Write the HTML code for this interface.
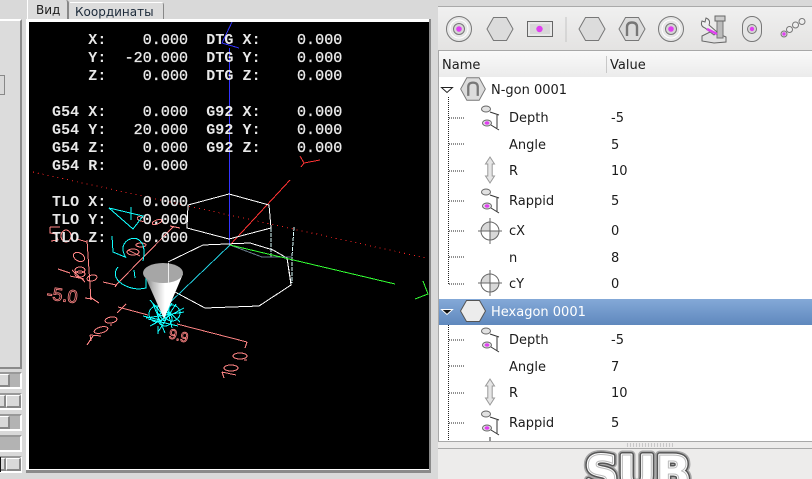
<!DOCTYPE html>
<html><head><meta charset="utf-8"><style>
html,body{margin:0;padding:0;background:#d9d9d9}
body{width:812px;height:479px;overflow:hidden;position:relative;font-family:"DejaVu Sans","Liberation Sans",sans-serif;font-size:13px;color:#1c1c1c}
div{position:absolute;box-sizing:border-box}
.t{white-space:nowrap;line-height:16px;height:16px}
.trough{left:0;width:22px;height:17px;background:#b3b3b3;border-right:2px solid #fff;border-bottom:2px solid #fff;border-top:2px solid #999}
.btn{background:#d9d9d9;border-top:1px solid #fff;border-right:2px solid #888;border-bottom:2px solid #888}
pre b{-webkit-text-stroke:0;font-weight:bold}
</style></head><body>
<!-- left panel -->
<div style="left:0;top:19px;width:22px;height:350px;background:#dcdcdc;border-top:2px solid #fff;border-right:2px solid #8a8a8a;border-bottom:2px solid #8a8a8a"></div>
<div style="left:0;top:75px;width:5px;height:20px;background:#d9d9d9;border:1px solid #888;border-left:0"></div>
<div class="trough" style="top:372px"><div class="btn" style="left:0;top:0;width:10px;height:13px"></div></div>
<div class="trough" style="top:393px"><div class="btn" style="left:6px;top:0;width:15px;height:13px;border-left:1px solid #fff"></div><div class="btn" style="left:0;top:0;width:6px;height:13px"></div></div>
<div class="trough" style="top:414px"><div class="btn" style="left:0;top:0;width:10px;height:13px"></div></div>
<div class="trough" style="top:435px"></div>
<div class="trough" style="top:456px"><div class="btn" style="left:6px;top:0;width:15px;height:13px;border-left:1px solid #fff"></div><div class="btn" style="left:0;top:0;width:6px;height:13px"></div><div style="left:0;top:-1px;width:1px;height:15px;background:#111"></div></div>
<!-- tabs -->
<div style="left:27px;top:0;width:42px;height:21px;background:#dcdcdc;border-left:1px solid #fff;border-right:2px solid #888;border-top-right-radius:3px"></div>
<div class="t" style="left:36px;top:2px;font-size:12px">Вид</div>
<div style="left:70px;top:2px;width:94px;height:18px;background:#dcdcdc;border-top:1px solid #fff;border-right:1px solid #888;border-top-right-radius:3px"></div>
<div class="t" style="left:75px;top:4px;font-size:12px;color:#1c2a3a">Координаты</div>
<!-- viewport frame -->
<div style="left:26px;top:19px;width:405px;height:454px;background:#fff;border-right:2px solid #8a8a8a;border-bottom:3px solid #8a8a8a"></div>
<div style="left:29px;top:22px;width:400px;height:447px;background:#000;overflow:hidden">
<svg width="400" height="447" viewBox="29 22 400 447" style="position:absolute;left:0;top:0">
<defs><linearGradient id="cone" x1="143" x2="183" y1="0" y2="0" gradientUnits="userSpaceOnUse"><stop offset="0" stop-color="#666"/><stop offset=".25" stop-color="#bbb"/><stop offset=".55" stop-color="#fff"/><stop offset="1" stop-color="#fff"/></linearGradient></defs>
<g fill="none" stroke-width="1" shape-rendering="crispEdges">
<path d="M28 171L426 258" stroke="#e22" stroke-dasharray="1 4"/>
<path d="M229.500 48V245" stroke="#33f"/>
<path d="M232 22L222 43L239 48" stroke="#33f"/>
<path d="M230 245L290 180" stroke="#f33"/>
<path d="M300 156L304 163L320 160M304 163L301 167" stroke="#f33"/>
<path d="M188 205L229 194L269 205L271 228L229 239L187 228Z" stroke="#fff"/>
<path d="M168 262L203 245L250 243L273 250L287 258L291 285L259 306L205 308L175 292" stroke="#fff"/>
<path d="M271 228V257M294 227L292 257V283" stroke="#dff" stroke-dasharray="4 1"/>
<path d="M287 258L291 283" stroke="#fff"/>
<path d="M230 245L262 257L292 257" stroke="#678" />
<path d="M230 245L395 284" stroke="#3f3"/>
<path d="M423 281L428 294L415 299" stroke="#3f3"/>
<path d="M230 245L160 312" stroke="#2cd"/>
<!-- pink -->
<g stroke="#ff8585">
<path d="M87 240L91 300M77 239L87 242M90 297L99 303M85 298L92 299"/>
<path d="M117 284L173 227M170 226L180 228M103 282L116 285M115 287L117 284"/>
<path d="M58 269L70 273M126 304L117 313M118 307L148 315M177 324L247 342M247 342L245 348"/>
<ellipse cx="79" cy="257" rx="6" ry="4" transform="rotate(30 79 257)"/>
<ellipse cx="80" cy="270" rx="5" ry="3"/><ellipse cx="80" cy="274" rx="5" ry="3"/>
<path d="M70 276L84 279M72 270L85 282"/>
<ellipse cx="92" cy="278" rx="5" ry="3" transform="rotate(-15 92 278)"/>
<ellipse cx="141" cy="219" rx="4" ry="2" transform="rotate(20 141 219)"/><ellipse cx="157" cy="222" rx="5" ry="2" transform="rotate(-20 157 222)"/>
<ellipse cx="141" cy="245" rx="5" ry="2"/><ellipse cx="133" cy="252" rx="6" ry="3"/>
<path d="M128 250L140 256"/>
<ellipse cx="111" cy="320" rx="6" ry="3" transform="rotate(-10 111 320)"/>
<path d="M110 325h2"/>
<ellipse cx="101" cy="330" rx="7" ry="3" transform="rotate(-15 101 330)"/>
<path d="M90 335L101 336M90 335L91 341M93 336L87 345"/>
<ellipse cx="240" cy="356" rx="7" ry="3"/><path d="M244 360h3"/>
<ellipse cx="231" cy="368" rx="7" ry="3"/>
<path d="M222 372L236 375M222 372L224 378"/>
<path d="M50 227H60M50 227V233L56 234L58 240L51 241"/>
<ellipse cx="66" cy="236" rx="5" ry="6"/>
</g>
<g fill="none" stroke="#ff8585" font-family="Liberation Sans" stroke-width=".8">
<text x="46" y="299" font-size="18" transform="rotate(8 46 299)">-5.0</text>
<text x="168" y="338" font-size="14" transform="rotate(14 168 338)">9.9</text>
</g>
<!-- cyan -->
<g stroke="#1ff">
<path d="M109 208L143 216L133 229ZM131 207V220"/>
<path d="M112 236L113 252L125 257"/>
<path d="M126 258Q119 246 128 240Q138 235 143 245Q145 252 143 261"/>
<path d="M118 267Q111 276 122 284Q134 291 146 288L146 277M134 270L135 278"/>
<path d="M150 300L164 316L172 303M146 318L184 312M153 304L165 333M176 304L158 332M148 319L178 326M158 302L180 322M150 326L184 308M168 312L172 328M158 326V334M143 316L160 320"/>
<circle cx="157" cy="314" r="8"/><circle cx="172" cy="313" r="8"/><circle cx="165" cy="319" r="7"/><circle cx="163" cy="310" r="6"/>
</g>
</g>
<path d="M144 274L164 319L183 274Z" fill="url(#cone)"/>
<ellipse cx="163" cy="273" rx="20" ry="10" fill="#a6a6a6"/>
<path d="M168.500 263V283" stroke="#eee" stroke-width="1"/>
<path d="M164 321L158 314M164 321L170 313" stroke="#1ff" shape-rendering="crispEdges"/>
</svg>
<pre style="position:absolute;left:23px;top:10px;margin:0;font:15px/18px 'Liberation Mono',monospace;letter-spacing:.07px;color:#e8e8e8;-webkit-text-stroke:.35px #e8e8e8">    <b>X:</b>    0.000  <b>DTG X:</b>    0.000
    <b>Y:</b>  -20.000  <b>DTG Y:</b>    0.000
    <b>Z:</b>    0.000  <b>DTG Z:</b>    0.000

<b>G54 X:</b>    0.000  <b>G92 X:</b>    0.000
<b>G54 Y:</b>   20.000  <b>G92 Y:</b>    0.000
<b>G54 Z:</b>    0.000  <b>G92 Z:</b>    0.000
<b>G54 R:</b>    0.000

<b>TLO X:</b>    0.000
<b>TLO Y:</b>    0.000
<b>TLO Z:</b>    0.000</pre>
</div>
<!-- right panel -->
<div style="left:438px;top:0;width:374px;height:7px;background:#d9d9d9;border-bottom:1px solid #aaa"></div>
<div style="left:438px;top:7px;width:374px;height:44px;background:linear-gradient(#f0f0f0,#e4e3e2);border-bottom:1px solid #a8a8a8"></div>
<div style="left:438px;top:51px;width:374px;height:391px;background:#fff;border-left:1px solid #a8a8a8;border-bottom:1px solid #a8a8a8"></div>
<div style="left:439px;top:51px;width:373px;height:26px;background:linear-gradient(#fafafa,#ebebeb)"></div>
<div style="left:606px;top:56px;width:1px;height:17px;background:#c8c8c8"></div>
<div class="t" style="left:442px;top:58px">Name</div>
<div class="t" style="left:610px;top:58px">Value</div>
<div style="left:439px;top:299px;width:373px;height:26px;background:linear-gradient(#84a9d8,#5f88bd)"></div>
<div style="left:438px;top:442px;width:374px;height:6px;background:#edeceb"></div>
<div style="left:438px;top:448px;width:374px;height:31px;background:#edeceb;border-top:1px solid #a8a8a8"></div>
<div style="left:626px;top:443px;width:47px;height:4px;background-image:radial-gradient(circle,#aaa 0.7px,transparent 0.8px);background-size:3px 2px"></div>
<svg width="812" height="479" style="position:absolute;left:0;top:0">
<defs>
<symbol id="circ" overflow="visible"><circle r="12.500" fill="#e6e6e6" stroke="#777"/><circle r="9" fill="none" stroke="#fff"/><circle r="5.500" fill="#d6d6d6" stroke="#777"/><circle r="2.800" fill="#e040f0"/></symbol>
<symbol id="hex" overflow="visible"><path d="M-13 0L-6.500-11.500H6.500L13 0L6.500 11.500H-6.500Z" fill="#dcdcdc" stroke="#777"/></symbol>
<symbol id="ngon" overflow="visible"><path d="M-13 0L-6.500-11.500H6.500L13 0L6.500 11.500H-6.500Z" fill="#dcdcdc" stroke="#777"/><path d="M-5 7V-2Q-5-6.500 0-6.500Q5-6.500 5-2V7" fill="none" stroke="#777" stroke-width="2.400"/></symbol>
<symbol id="depth" overflow="visible"><ellipse cx="-4" cy="-8" rx="4.500" ry="3" fill="#e2e2e2" stroke="#666"/><ellipse cx="-3" cy="6" rx="4.500" ry="3" fill="#e2e2e2" stroke="#666"/><ellipse cx="-3" cy="6" rx="2.400" ry="1.800" fill="#e040f0"/><path d="M0-5L9-2M1 8L9 13M7-2V12" fill="none" stroke="#333"/></symbol>
<symbol id="arr" overflow="visible"><path d="M0-13L4.500-6H2.200V6H4.500L0 13L-4.500 6H-2.200V-6H-4.500Z" fill="#e6e6e6" stroke="#999"/></symbol>
<symbol id="cross" overflow="visible"><path d="M0-9A9 9 0 0 0-9 0H0Z M0 0H9A9 9 0 0 1 0 9Z" fill="#d8d8d8"/><circle r="9" fill="none" stroke="#666"/><path d="M-12 0H12M0-13V13" stroke="#666"/></symbol>
</defs>
<use href="#circ" x="459" y="29"/>
<use href="#hex" x="500" y="29"/>
<rect x="527.500" y="21.500" width="25" height="15" fill="#e8e8e8" stroke="#666"/><rect x="530" y="24" width="20" height="10" fill="#d8d8d8"/><circle cx="539.500" cy="29" r="3.200" fill="#e040f0"/>
<path d="M566 17V42" stroke="#c4c4c4"/>
<use href="#hex" x="592" y="29"/>
<use href="#ngon" x="632" y="29"/>
<use href="#circ" x="671" y="29"/>
<!-- tool -->
<path d="M702 36L712 31L726 37V42L714 43L702 41Z" fill="#e2e2e2" stroke="#666"/>
<path d="M717 20H723V38H717Z" fill="#bbb" stroke="#777"/><path d="M715 16H725V21H715Z" fill="#ccc" stroke="#666"/>
<path d="M702 21Q700 26 705 28L714 35L717 32L709 25Q711 20 706 18L705 22Z" fill="#eee" stroke="#666"/>
<path d="M707 29L717 34" stroke="#e040f0" stroke-width="2.500"/>
<!-- oblong -->
<rect x="742.500" y="16.500" width="19" height="25" rx="9.500" fill="#e6e6e6" stroke="#777"/><circle cx="752" cy="29" r="4.500" fill="#d6d6d6" stroke="#777"/><circle cx="752" cy="29" r="2.200" fill="#e040f0"/>
<!-- chain -->
<g fill="#eee" stroke="#777"><circle cx="802" cy="21.500" r="3"/><circle cx="795.500" cy="25" r="3"/><circle cx="789.500" cy="29.500" r="3"/></g><circle cx="784" cy="34" r="3" fill="#ddd" stroke="#777"/><circle cx="784" cy="34" r="1.700" fill="#e040f0"/>
<!-- tree lines -->
<g stroke="#222" stroke-dasharray="1 1" fill="none">
<path d="M448.500 97V284M449 118H465M449 144H465M449 171H465M449 201H465M449 231H465M449 257H465M449 284H465"/>
<path d="M448.500 325V441M449 340H465M449 366H465M449 393H465M449 423H465"/>
</g>
<path d="M441.500 87.500H452.500L447 92.500Z" fill="#fff" stroke="#222"/>
<path d="M441.500 309.500H452.500L447 314.500Z" fill="#111" stroke="#fff"/>
<g transform="translate(473 89) scale(.95 .98)"><path d="M-13 0L-6.500-11.500H6.500L13 0L6.500 11.500H-6.500Z" fill="#dcdcdc" stroke="#777"/><path d="M-5 7V-2Q-5-6.500 0-6.500Q5-6.500 5-2V7" fill="none" stroke="#777" stroke-width="2.400"/></g>
<g transform="translate(473 311)"><path d="M-12.500 0L-6.500-10.500H6.500L12.500 0L6.500 10.500H-6.500Z" fill="#ececec" stroke="#555"/></g>
<use href="#depth" x="490" y="117"/>
<use href="#arr" x="490" y="170"/>
<use href="#depth" x="490" y="200"/>
<use href="#cross" x="490" y="231"/>
<use href="#cross" x="490" y="283"/>
<use href="#depth" x="490" y="339"/>
<use href="#arr" x="490" y="392"/>
<use href="#depth" x="490" y="422"/>
<path d="M490 441V437" stroke="#333"/>
<!-- logo -->
<g font-family="DejaVu Sans" font-weight="bold" font-size="46" stroke-linejoin="round">
<text x="585" y="489" fill="none" stroke="#a8a8a8" stroke-width="9">SUB</text>
<text x="585" y="489" fill="none" stroke="#555" stroke-width="6">SUB</text>
<text x="585" y="489" fill="#fff" stroke="#fff" stroke-width="3">SUB</text>
<text x="585" y="489" fill="#fff" stroke="#bbb" stroke-width="1">SUB</text>
</g>
</svg>
<div class="t" style="left:491px;top:83px">N-gon 0001</div>
<div class="t" style="left:509px;top:111px">Depth</div><div class="t" style="left:611px;top:111px">-5</div>
<div class="t" style="left:509px;top:138px">Angle</div><div class="t" style="left:611px;top:138px">5</div>
<div class="t" style="left:509px;top:164px">R</div><div class="t" style="left:611px;top:164px">10</div>
<div class="t" style="left:509px;top:194px">Rappid</div><div class="t" style="left:611px;top:194px">5</div>
<div class="t" style="left:509px;top:224px">cX</div><div class="t" style="left:611px;top:224px">0</div>
<div class="t" style="left:509px;top:251px">n</div><div class="t" style="left:611px;top:251px">8</div>
<div class="t" style="left:509px;top:277px">cY</div><div class="t" style="left:611px;top:277px">0</div>
<div class="t" style="left:491px;top:305px;color:#fff">Hexagon 0001</div>
<div class="t" style="left:509px;top:333px">Depth</div><div class="t" style="left:611px;top:333px">-5</div>
<div class="t" style="left:509px;top:360px">Angle</div><div class="t" style="left:611px;top:360px">7</div>
<div class="t" style="left:509px;top:386px">R</div><div class="t" style="left:611px;top:386px">10</div>
<div class="t" style="left:509px;top:416px">Rappid</div><div class="t" style="left:611px;top:416px">5</div>
</body></html>
